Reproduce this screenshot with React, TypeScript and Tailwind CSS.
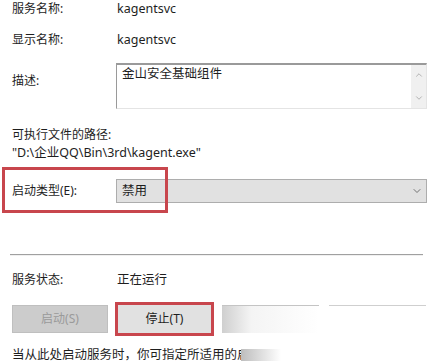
import { ChevronDown, ChevronUp } from "lucide-react"

const font = { fontFamily: '"Noto Sans", "Noto Sans CJK SC", sans-serif' }

function Row({ label, value, className = "" }: { label: string; value: string; className?: string }) {
  return (
    <div className={`flex h-4 items-center leading-4 ${className}`}>
      <span className="w-[105px]">{label}</span>
      <span className="text-[12.5px] leading-4">{value}</span>
    </div>
  )
}

export default function App() {
  return (
    <div className="relative h-[363px] w-[438px] overflow-hidden bg-white text-[12px] text-[#1e1e1e]" style={font}>
      <div className="flex flex-col pl-3">
        <Row label="服务名称:" value="kagentsvc" className="mt-[1px]" />
        <Row label="显示名称:" value="kagentsvc" className="mt-[15px]" />

        <div className="mt-[15px] flex">
          <span className="mt-[9px] w-[104px]">描述:</span>
          <div className="flex h-[46px] w-[311px] border-t-2 border-l border-t-[#9a9a9a] border-l-[#9a9a9a] border-r border-b border-r-[#e4e4e4] border-b-[#e4e4e4]">
            <div className="flex-1 px-[5px] pt-[1px] text-[12.5px] leading-4">金山安全基础组件</div>
            <div className="flex w-[15px] flex-col items-center justify-between bg-[#f0f0f0] py-[5px] text-[#a6a6a6]">
              <ChevronUp size={10} strokeWidth={2} />
              <ChevronDown size={10} strokeWidth={2} />
            </div>
          </div>
        </div>

        <div className="mt-[18px] h-4 leading-4">可执行文件的路径:</div>
        <div className="mt-[2px] h-4 text-[12.5px] leading-4">"D:\企业QQ\Bin\3rd\kagent.exe"</div>

        <div className="mt-[18px] flex h-6 items-center">
          <span className="w-[104px]">启动类型(E):</span>
          <div className="flex h-6 w-[311px] items-center justify-between border border-[#adadad] bg-[#e1e1e1] pl-[5px] pr-[3px]">
            <span className="text-[12.5px]">禁用</span>
            <ChevronDown size={12} strokeWidth={1.6} className="text-[#555]" />
          </div>
        </div>

        <div className="mt-[51px] mr-[15px] -ml-[2px] h-[2px] border-t border-b border-t-[#a0a0a0] border-b-[#f0f0f0]" />

        <Row label="服务状态:" value="正在运行" className="mt-[16px]" />
      </div>

      <div className="mt-[14px] flex h-[34px] items-center pl-3">
        <div className="flex h-7 w-[96px] items-center justify-center border border-[#bfbfbf] bg-[#cccccc] text-[#9a9a9a]">启动(S)</div>
        <div className="ml-[7px] flex h-[34px] w-[99px] items-center justify-center border-[3px] border-[#c8464d] bg-[#e1e1e1]">停止(T)</div>
        <div className="ml-[8px] h-7 w-[97px] border-t border-t-[#c4c4c4] bg-gradient-to-r from-[#cfcfcf] via-[#f4f4f4] via-30% to-white" />
        <div className="ml-[10px] h-7 w-[97px] border-t border-t-[#cfcfcf] bg-white" />
      </div>

      <div className="mt-[11px] flex h-4 items-center pl-3 text-[12.5px] leading-4">
        <span className="block w-[229px] overflow-hidden whitespace-nowrap">当从此处启动服务时，你可指定所适用的启</span>
        <span className="h-3 w-[40px] bg-gradient-to-r from-[#bdbdbd] to-white" />
      </div>

      <div className="pointer-events-none absolute left-[2px] top-[167px] h-[46px] w-[166px] border-[3px] border-[#c8464d]" />
    </div>
  )
}
